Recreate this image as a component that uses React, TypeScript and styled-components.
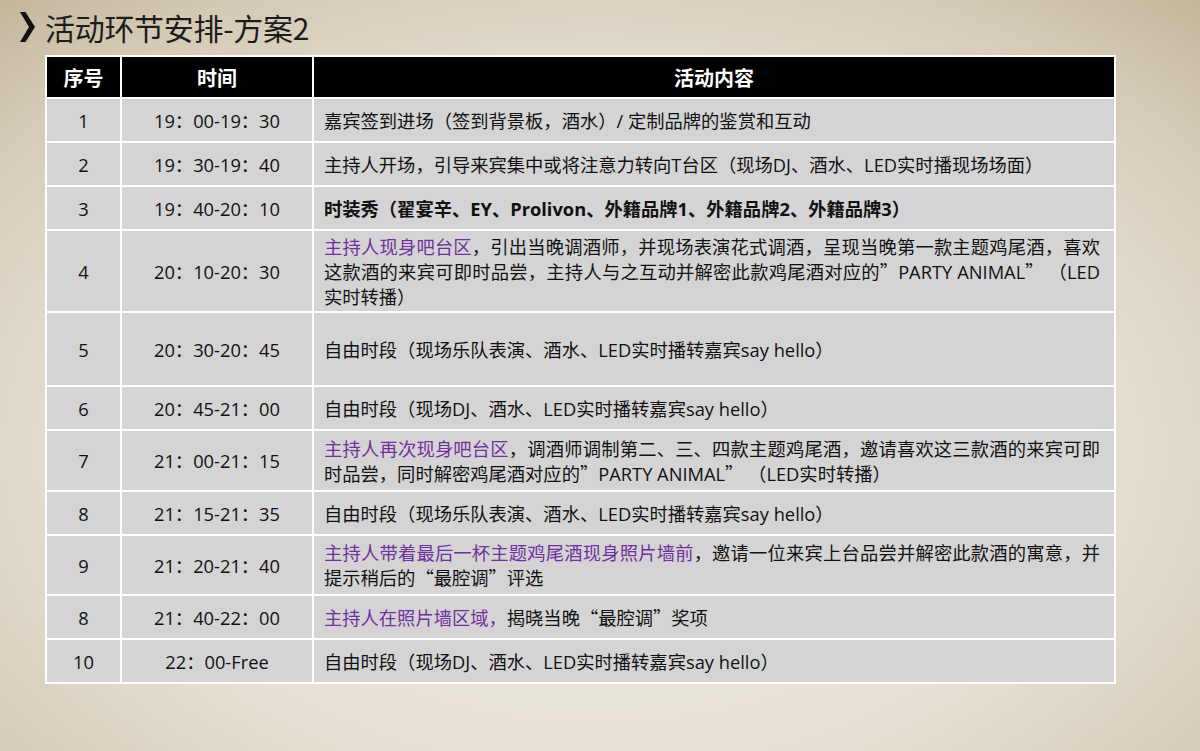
import React from "react";
import styled, { createGlobalStyle } from "styled-components";

const GlobalStyle = createGlobalStyle`
  html, body {
    margin: 0;
    padding: 0;
  }
  body {
    font-family: "Open Sans", "Noto Sans CJK SC", sans-serif;
  }
`;

const Slide = styled.div`
  width: 1200px;
  height: 751px;
  overflow: hidden;
  box-sizing: border-box;
  padding: 8px 0 0 19px;
  background: radial-gradient(
    ellipse 75% 80% at 50% 60%,
    #f0ede6 0%,
    #e6e0d4 55%,
    #d4c9b4 85%,
    #c4b69c 100%
  );
`;

const Title = styled.h1`
  display: flex;
  align-items: center;
  gap: 9px;
  margin: 0;
  height: 38px;
  font-family: "Noto Sans CJK SC", "Open Sans", sans-serif;
  font-weight: 400;
  font-size: 30px;
  color: #1c1c1c;
  letter-spacing: -0.3px;
`;

const Chevron = styled.svg`
  width: 17px;
  height: 32px;
  flex-shrink: 0;
`;

const Table = styled.table`
  margin: 9px 0 0 26px;
  width: 1071px;
  border-collapse: separate;
  border-spacing: 2px;
  background: #ffffff;
  table-layout: fixed;
`;

const HeadCell = styled.th<{ $w: number }>`
  width: ${(p) => p.$w}px;
  height: 40px;
  padding: 0;
  background: #000000;
  color: #ffffff;
  font-family: "Noto Sans CJK SC", sans-serif;
  font-weight: 700;
  font-size: 20px;
  text-align: center;
`;

const Cell = styled.td<{ $align?: "left" | "center" }>`
  background: #d4d4d4;
  color: #111111;
  font-family: "Open Sans", "Noto Sans CJK SC", sans-serif;
  font-size: 18.3px;
  line-height: 25px;
  padding: ${(p) => (p.$align === "left" ? "0 14px 0 10px" : "0 6px")};
  text-align: ${(p) => p.$align ?? "center"};
  vertical-align: middle;
  white-space: nowrap;
`;

const Line = styled.div<{ $justify?: boolean }>`
  text-align: ${(p) => (p.$justify ? "justify" : "left")};
  text-align-last: ${(p) => (p.$justify ? "justify" : "left")};
`;

const Row = styled.tr<{ $h: number }>`
  height: ${(p) => p.$h}px;
`;

const Purple = styled.span`
  color: #7030a0;
`;

const Bold = styled.span`
  font-weight: 700;
`;

const Q = styled.span`
  font-family: "Noto Sans CJK SC", sans-serif;
`;

type Item = {
  no: string;
  time: string;
  h: number;
  content: React.ReactNode;
};

const items: Item[] = [
  { no: "1", time: "19：00-19：30", h: 42, content: "嘉宾签到进场（签到背景板，酒水）/ 定制品牌的鉴赏和互动" },
  { no: "2", time: "19：30-19：40", h: 42, content: "主持人开场，引导来宾集中或将注意力转向T台区（现场DJ、酒水、LED实时播现场场面）" },
  {
    no: "3",
    time: "19：40-20：10",
    h: 42,
    content: <Bold>时装秀（翟宴辛、EY、Prolivon、外籍品牌1、外籍品牌2、外籍品牌3）</Bold>,
  },
  {
    no: "4",
    time: "20：10-20：30",
    h: 80,
    content: (
      <>
        <Line $justify>
          <Purple>主持人现身吧台区</Purple>，引出当晚调酒师，并现场表演花式调酒，呈现当晚第一款主题鸡尾酒，喜欢
        </Line>
        <Line $justify>
          这款酒的来宾可即时品尝，主持人与之互动并解密此款鸡尾酒对应的<Q>”</Q>PARTY ANIMAL<Q>”</Q> （LED
        </Line>
        <Line>实时转播）</Line>
      </>
    ),
  },
  { no: "5", time: "20：30-20：45", h: 72, content: "自由时段（现场乐队表演、酒水、LED实时播转嘉宾say hello）" },
  { no: "6", time: "20：45-21：00", h: 42, content: "自由时段（现场DJ、酒水、LED实时播转嘉宾say hello）" },
  {
    no: "7",
    time: "21：00-21：15",
    h: 59,
    content: (
      <>
        <Line $justify>
          <Purple>主持人再次现身吧台区</Purple>，调酒师调制第二、三、四款主题鸡尾酒，邀请喜欢这三款酒的来宾可即
        </Line>
        <Line>
          时品尝，同时解密鸡尾酒对应的<Q>”</Q>PARTY ANIMAL<Q>”</Q> （LED实时转播）
        </Line>
      </>
    ),
  },
  { no: "8", time: "21：15-21：35", h: 42, content: "自由时段（现场乐队表演、酒水、LED实时播转嘉宾say hello）" },
  {
    no: "9",
    time: "21：20-21：40",
    h: 58,
    content: (
      <>
        <Line $justify>
          <Purple>主持人带着最后一杯主题鸡尾酒现身照片墙前</Purple>，邀请一位来宾上台品尝并解密此款酒的寓意，并
        </Line>
        <Line>
          提示稍后的<Q>“</Q>最腔调<Q>”</Q>评选
        </Line>
      </>
    ),
  },
  {
    no: "8",
    time: "21：40-22：00",
    h: 42,
    content: (
      <>
        <Purple>主持人在照片墙区域，</Purple>揭晓当晚<Q>“</Q>最腔调<Q>”</Q>奖项
      </>
    ),
  },
  { no: "10", time: "22：00-Free", h: 42, content: "自由时段（现场DJ、酒水、LED实时播转嘉宾say hello）" },
];

export default function App() {
  return (
    <>
      <GlobalStyle />
      <Slide>
        <Title>
          <Chevron viewBox="0 0 17 32">
            <path d="M1 1 L6.5 1 L16 16 L6.5 31 L1 31 L10 16 Z" fill="#111" />
          </Chevron>
          活动环节安排-方案2
        </Title>
        <Table>
          <thead>
            <tr>
              <HeadCell $w={73}>序号</HeadCell>
              <HeadCell $w={190}>时间</HeadCell>
              <HeadCell $w={800}>活动内容</HeadCell>
            </tr>
          </thead>
          <tbody>
            {items.map((it, i) => (
              <Row key={i} $h={it.h}>
                <Cell>{it.no}</Cell>
                <Cell>{it.time}</Cell>
                <Cell $align="left">{it.content}</Cell>
              </Row>
            ))}
          </tbody>
        </Table>
      </Slide>
    </>
  );
}
